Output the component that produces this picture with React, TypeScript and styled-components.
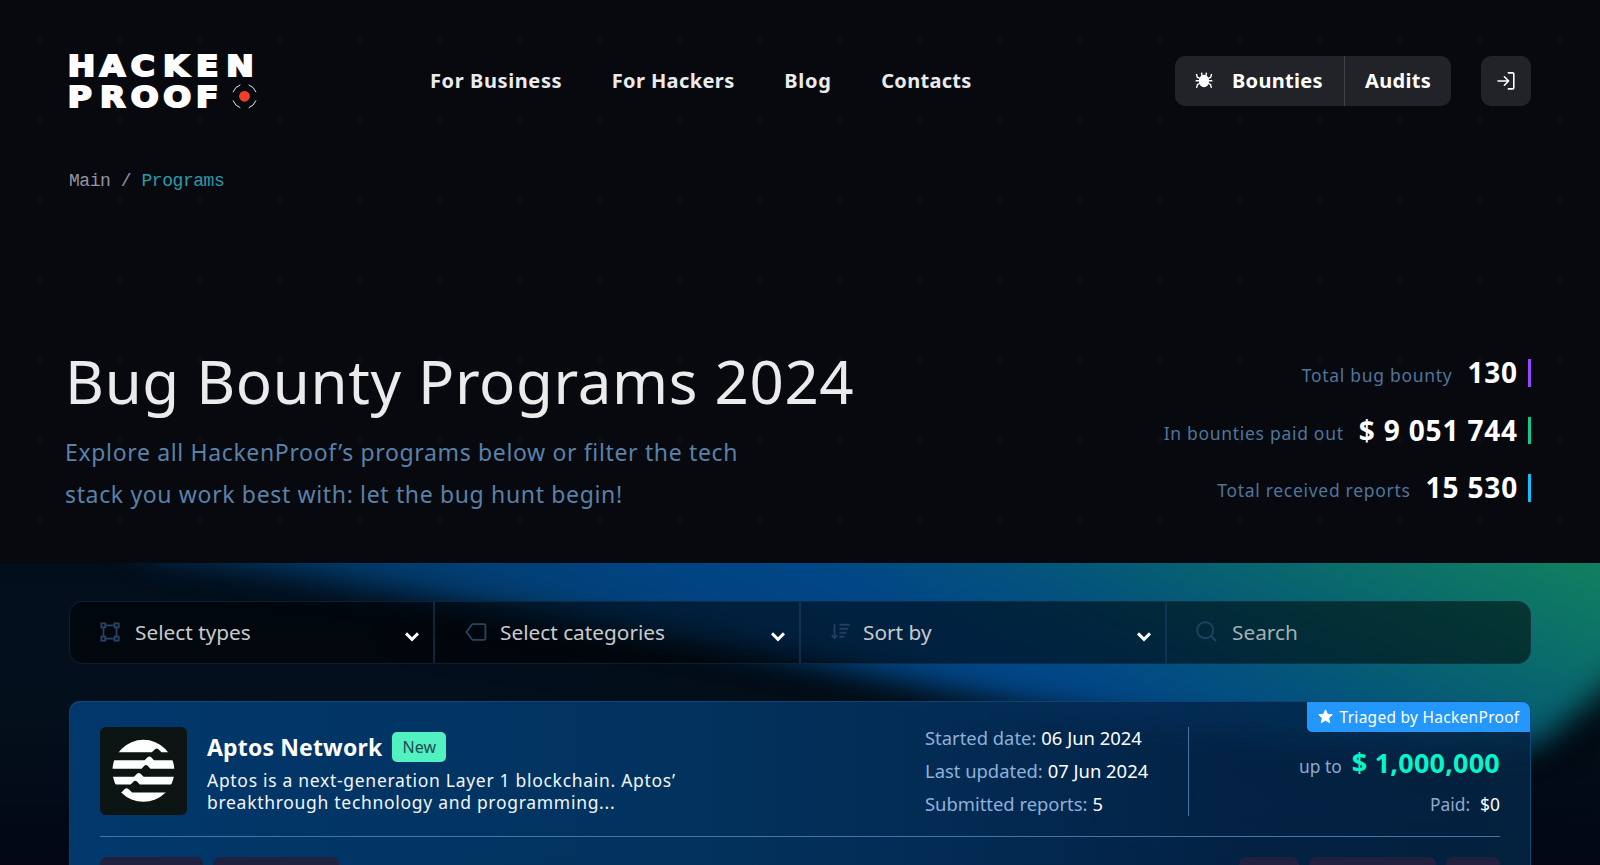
import React from 'react';
import styled, { createGlobalStyle } from 'styled-components';

const Global = createGlobalStyle`
  *, *::before, *::after { box-sizing: border-box; }
  body {
    margin: 0;
    background: #020812;
    color: #fff;
    font-family: 'Noto Sans', sans-serif;
    overflow: hidden;
  }
  h1, h2, p, dl, dd, dt { margin: 0; font-weight: inherit; }
  a { color: inherit; text-decoration: none; }
  button { font: inherit; color: inherit; border: 0; padding: 0; background: none; }
`;

const Page = styled.div`
  width: 1600px;
  height: 865px;
  overflow: hidden;
  display: flex;
  flex-direction: column;
`;

/* ---------- hero ---------- */
const Hero = styled.header`
  flex: none;
  height: 563px;
  padding: 0 69px;
  background: #07090f url("data:image/svg+xml,%3Csvg xmlns='http://www.w3.org/2000/svg' width='80' height='80'%3E%3Cpath d='M35 40h10M40 35v10' stroke='%23ffffff' stroke-opacity='.035'/%3E%3C/svg%3E");
`;

const TopBar = styled.div`
  display: flex;
  align-items: center;
  height: 50px;
  margin-top: 56px;
`;

const LogoLink = styled.a`
  display: block;
  width: 188px;
  height: 56px;
  margin-right: 173px;
  svg { overflow: visible; }
`;

const Nav = styled.nav`
  display: flex;
  flex: 1;
  gap: 49.5px;
`;

const NavLink = styled.a<{ $ls: number }>`
  font-size: 20px;
  font-weight: 700;
  line-height: 50px;
  color: #ebebeb;
  letter-spacing: ${(p) => p.$ls}px;
`;

const Switch = styled.div`
  display: flex;
  width: 276px;
  height: 50px;
  margin-right: 30px;
  background: #222329;
  border-radius: 10px;
`;

const SwitchItem = styled.button<{ $width: number; $first?: boolean }>`
  display: flex;
  align-items: center;
  width: ${(p) => p.$width}px;
  padding: 0 0 2px 20px;
  gap: 19px;
  font-size: 20px;
  font-weight: 700;
  letter-spacing: 0.3px;
  border-right: ${(p) => (p.$first ? '1px solid #414248' : '0')};
`;

const LoginButton = styled.button`
  display: grid;
  place-items: center;
  width: 50px;
  height: 50px;
  border-radius: 10px;
  background: #222329;
`;

const Crumbs = styled.div`
  margin-top: 64px;
  height: 22px;
  font: 18px/22px 'Liberation Mono', monospace;
  letter-spacing: -0.45px;
  white-space: pre;
  color: #9296a1;
  span { color: #2a9ca9; }
`;

const HeroBody = styled.div`
  display: flex;
  justify-content: space-between;
  margin-top: 146px;
`;

const Intro = styled.div`
  margin: 1px 0 0 -4px;
`;

const Title = styled.h1`
  font-size: 60px;
  line-height: 84px;
  letter-spacing: 0.64px;
  white-space: nowrap;
  color: #ebebeb;
`;

const Lead = styled.p`
  font-size: 23px;
  line-height: 42px;
  letter-spacing: 0.65px;
  color: #5a81a8;
  margin-top: 8px;
`;

const Stats = styled.dl`
  display: flex;
  flex-direction: column;
  align-items: flex-end;
  gap: 30px;
  margin-top: 21px;
`;

const Stat = styled.div<{ $color: string }>`
  display: flex;
  align-items: baseline;
  height: 27.5px;
  line-height: 26px;
  padding-right: 10px;
  border-right: 3px solid ${(p) => p.$color};
`;

const StatLabel = styled.dt`
  font-size: 17.5px;
  letter-spacing: 0.7px;
  color: #50759b;
  margin-right: 15px;
  transform: translateY(-1px);
`;

const StatValue = styled.dd`
  font-size: 28px;
  font-weight: 700;
  letter-spacing: 0.85px;
`;

/* ---------- programs ---------- */
const Programs = styled.main`
  position: relative;
  flex: 1;
  padding: 38px 69px 0;
  overflow: hidden;
  background: linear-gradient(180deg, #020e1c 0, #03101c 45%, #020713 100%);
`;

const Glow = styled.svg`
  position: absolute;
  inset: 0;
`;

const Filters = styled.div`
  position: relative;
  display: flex;
  height: 63px;
  border: 1px solid rgba(36, 60, 94, 0.42);
  border-radius: 14px;
  background: rgba(0, 0, 0, 0.52);
`;

const Filter = styled.div<{ $gap: number; $pad: number; $width: number; $muted?: boolean }>`
  display: flex;
  width: ${(p) => p.$width}px;
  align-items: center;
  padding: 0 14px 0 ${(p) => p.$pad}px;
  font-size: 20.8px;
  color: ${(p) => (p.$muted ? '#a1b1b1' : '#c8cacd')};
  svg { flex: none; margin-bottom: 2px; }
  &:not(:last-child) { border-right: 2px solid rgba(31, 66, 106, 0.5); }
  span { flex: 1; margin: 0 0 2px ${(p) => p.$gap}px; }
  svg:last-child { margin: 8px 0 0; }
`;

const Card = styled.article`
  position: relative;
  margin-top: 37px;
  height: 220px;
  padding: 25px 30px 0;
  border: 1px solid rgba(40, 100, 150, 0.4);
  border-radius: 11px;
  background: linear-gradient(90deg, rgba(2, 58, 112, 0.96) 0, rgba(2, 53, 98, 0.95) 42%, rgba(3, 46, 89, 0.93) 60%, rgba(3, 38, 76, 0.86) 80%, rgba(4, 37, 68, 0.86) 100%);
`;

const CardTop = styled.div`
  display: flex;
  height: 110px;
  border-bottom: 1px solid #4376a7;
`;

const Avatar = styled.svg`
  flex: none;
  border-radius: 6px;
`;

const About = styled.div`
  width: 718px;
  margin-left: 20px;
`;

const NameRow = styled.div`
  display: flex;
  align-items: center;
  gap: 10px;
  margin-top: 5px;
  height: 30px;
`;

const Name = styled.h2`
  font-size: 23px;
  font-weight: 700;
  letter-spacing: 0.15px;
  line-height: 28px;
  margin-bottom: 1px;
`;

const NewBadge = styled.span`
  width: 54px;
  font-size: 16px;
  line-height: 31px;
  height: 30px;
  text-align: center;
  border-radius: 5px;
  color: #1e4a50;
  background: #51f1c1;
`;

const Description = styled.p`
  width: 500px;
  margin-top: 7px;
  font-size: 17.5px;
  line-height: 22px;
  letter-spacing: 0.7px;
  color: #f1f5f9;
`;

const Facts = styled.dl`
  width: 264px;
  height: 89px;
  border-right: 1px solid #4376a7;
`;

const Fact = styled.div`
  display: flex;
  gap: 5px;
  height: 33px;
  font-size: 18.4px;
  line-height: 22px;
  white-space: nowrap;
  dt { color: #8fb0da; }
`;

const Reward = styled.div`
  flex: 1;
  text-align: right;
  padding-top: 18px;
`;

const RewardLine = styled.div<{ $gap: number; $height: number }>`
  display: flex;
  justify-content: flex-end;
  align-items: baseline;
  gap: ${(p) => p.$gap}px;
  line-height: ${(p) => p.$height}px;
  font-size: 17.4px;
  color: #8fa9cd;
  strong { font-size: 27px; color: #05f6cb; letter-spacing: 0.2px; }
  b { font-weight: 400; color: #fff; }
`;

const Triaged = styled.div`
  position: absolute;
  top: 0;
  right: 0;
  display: flex;
  align-items: center;
  justify-content: center;
  gap: 7px;
  width: 223px;
  height: 30px;
  padding-bottom: 1px;
  font-size: 15.5px;
  letter-spacing: 0.28px;
  border-radius: 0 8px 0 5px;
  background: #2397fc;
`;

const Tags = styled.div`
  display: flex;
  gap: 10px;
  margin-top: 20px;
`;

const Tag = styled.span<{ $width: number; $push?: boolean }>`
  width: ${(p) => p.$width}px;
  height: 30px;
  margin-left: ${(p) => (p.$push ? 'auto' : '0')};
  border-radius: 7px;
  background: #1f213f;
`;

const Logo = () => (
  <svg width="188" height="56" viewBox="0 0 188 56" fill="#fff">
    <g
      fontFamily="DejaVu Sans"
      fontWeight="700"
      fontSize="28.5"
      stroke="#fff"
      strokeWidth="2"
      transform="scale(1.15 1)"
    >
      <text y="22.8" x="-1.2 26.8 53.8 81.8 110.4 136.8">HACKEN</text>
      <text y="53.8" x="-1.2 27 53.8 81.9 110.4">PROOF</text>
    </g>
    <circle cx="175.5" cy="43.3" r="5.4" fill="#f43e2c" />
    <circle
      cx="175.5" cy="43.3" r="12.2" fill="none" stroke="#e6e6e6" strokeWidth="1"
      pathLength="360" strokeDasharray="50 40" strokeDashoffset="-20"
    />
  </svg>
);

const BugIcon = () => (
  <svg width="18" height="18" viewBox="0 0 18 18" fill="#fff">
    <ellipse cx="9" cy="10" rx="5" ry="6.2" />
    <path
      d="M7 4.8 6.6 1.6M11 4.8l.4-3.2M5 7.4 2.4 6.4 1.4 3M13 7.4l2.6-1 1-3.4M.6 9.8h16.8M5 12.2l-2.6 1.4-.8 3.2M13 12.2l2.6 1.4.8 3.2"
      fill="none" stroke="#fff" strokeWidth="1.4"
    />
  </svg>
);

const LoginIcon = () => (
  <svg width="18" height="18" viewBox="0 0 18 18" fill="none" stroke="#fff" strokeWidth="1.6" strokeLinecap="round" strokeLinejoin="round">
    <path d="M1 9h10.5M7.4 4.8 11.6 9l-4.2 4.2M11.4.9h4.2q1.2 0 1.2 1.2v13.6q0 1.2-1.2 1.2h-4.2" />
  </svg>
);

const TypesIcon = () => (
  <svg width="20" height="20" viewBox="0 0 20 20" fill="none" stroke="#274468" strokeWidth="1.8">
    <path d="M1.3 1.3h4v4h-4zM14.7 1.3h4v4h-4zM1.3 14.7h4v4h-4zM14.7 14.7h4v4h-4zM5.3 3.3h9.4M5.3 16.7h9.4M3.5 5.3v9.4M16.5 5.3v9.4" />
  </svg>
);

const CategoryIcon = () => (
  <svg width="22" height="18" viewBox="0 0 22 18" fill="none" stroke="#274468" strokeWidth="1.8" strokeLinejoin="round">
    <path d="M7.2 1.2h11.6q1.6 0 1.6 1.6v12.4q0 1.6-1.6 1.6H7.2L1.4 9z" />
  </svg>
);

const SortIcon = () => (
  <svg width="20" height="17" viewBox="0 0 20 17" fill="none" stroke="#213f61" strokeWidth="1.9">
    <path d="M3.5.8v14M.8 12.4l2.7 2.7 2.7-2.7M8.4 1.8H19M8.4 5.8h8.8M8.4 9.8h6.8M8.4 13.8h4.8" />
  </svg>
);

const SearchIcon = () => (
  <svg width="21" height="21" viewBox="0 0 21 21" fill="none" stroke="#20425f" strokeWidth="1.9">
    <circle cx="9.2" cy="9.2" r="8" />
    <path d="m15 15 5 5" />
  </svg>
);

const Chevron = () => (
  <svg width="14" height="10" viewBox="0 0 14 10" fill="none" stroke="#fff" strokeWidth="3">
    <path d="m1 1.4 6 6 6-6" />
  </svg>
);

const StarIcon = () => (
  <svg width="15" height="15" viewBox="0 0 16 16" fill="#fff" stroke="#fff" strokeLinejoin="round">
    <path d="m8 .9 2.1 4.7 5.1.5-3.8 3.4 1.1 5.1L8 12l-4.5 2.6 1.1-5.1L.8 6.1l5.1-.5z" />
  </svg>
);

const AptosAvatar = () => (
  <Avatar width="87" height="88" viewBox="0 0 87 88">
    <rect width="87" height="88" fill="#0c1414" />
    <circle cx="43.4" cy="43.8" r="31" fill="#fff" />
    <g fill="#0c1414">
      <path d="M0 25.3h51.8l3.2-3q1.7-1.4 3.4 0l3 3H87v8H54l-2.8-3q-1.8-1.4-3.6 0l-3 3H0z" />
      <path d="M0 41.8h41.6l2.7-3q1.7-1.4 3.4 0l2.6 3H87v7.9H43.6l-3-3q-1.8-1.4-3.6 0l-3 3H0z" />
      <path d="M0 57.4h30.6l3-3q1.7-1.4 3.4 0l2.8 3H87v8H32.2l-3.8-3.4q-1.8-1.4-3.6 0l-3.4 3.4H0z" />
    </g>
  </Avatar>
);

const Backdrop = () => (
  <Glow width="1600" height="302" viewBox="0 0 1600 302">
    <defs>
      <linearGradient id="beam" gradientUnits="userSpaceOnUse" x1="200" y1="0" x2="423" y2="-512">
        <stop offset="0" stopColor="#02355f" />
        <stop offset="0.14" stopColor="#023c6e" />
        <stop offset="0.29" stopColor="#014380" />
        <stop offset="0.43" stopColor="#014687" />
        <stop offset="0.57" stopColor="#03527d" />
        <stop offset="0.714" stopColor="#076171" />
        <stop offset="0.857" stopColor="#0c7168" />
        <stop offset="1" stopColor="#118060" />
      </linearGradient>
      <filter id="soft" x="-20%" y="-50%" width="140%" height="200%" colorInterpolationFilters="sRGB">
        <feGaussianBlur stdDeviation="15" />
      </filter>
      <filter id="wide" x="-20%" y="-50%" width="140%" height="200%" colorInterpolationFilters="sRGB">
        <feGaussianBlur stdDeviation="22" />
      </filter>
    </defs>
    <path d="M400 60C600 80 700 120 900 150S1300 260 1600 200V150L900 100 500 30z" fill="#010609" opacity=".5" filter="url(#wide)" />
    <path
      d="M90-60 150 -8C350 16 480 46 640 70S860 112 980 134S1280 178 1420 184S1530 186 1580 146L1680 60V-80z"
      fill="url(#beam)" filter="url(#soft)"
    />
  </Glow>
);

const filters = [
  { label: 'Select types', icon: <TypesIcon />, pad: 30, gap: 15, width: 365 },
  { label: 'Select categories', icon: <CategoryIcon />, pad: 30, gap: 13, width: 366 },
  { label: 'Sort by', icon: <SortIcon />, pad: 30, gap: 12, width: 366 },
];

const stats = [
  { label: 'Total bug bounty', value: '130', color: '#9747ff' },
  { label: 'In bounties paid out', value: '$ 9 051 744', color: '#0fca8c' },
  { label: 'Total received reports', value: '15 530', color: '#12bfff' },
];

const facts = [
  ['Started date:', '06 Jun 2024'],
  ['Last updated:', '07 Jun 2024'],
  ['Submitted reports:', '5'],
];

export default function App() {
  return (
    <Page>
      <Global />
      <Hero>
        <TopBar>
          <LogoLink href="#"><Logo /></LogoLink>
          <Nav>
            <NavLink href="#" $ls={0.6}>For Business</NavLink>
            <NavLink href="#" $ls={0.4}>For Hackers</NavLink>
            <NavLink href="#" $ls={0.8}>Blog</NavLink>
            <NavLink href="#" $ls={0.3}>Contacts</NavLink>
          </Nav>
          <Switch>
            <SwitchItem $width={170} $first><BugIcon />Bounties</SwitchItem>
            <SwitchItem $width={106}>Audits</SwitchItem>
          </Switch>
          <LoginButton><LoginIcon /></LoginButton>
        </TopBar>
        <Crumbs>Main / <span>Programs</span></Crumbs>
        <HeroBody>
          <Intro>
            <Title>Bug Bounty Programs 2024</Title>
            <Lead>
              Explore all HackenProof’s programs below or filter the tech<br />
              stack you work best with: let the bug hunt begin!
            </Lead>
          </Intro>
          <Stats>
            {stats.map((s) => (
              <Stat key={s.label} $color={s.color}>
                <StatLabel>{s.label}</StatLabel>
                <StatValue>{s.value}</StatValue>
              </Stat>
            ))}
          </Stats>
        </HeroBody>
      </Hero>
      <Programs>
        <Backdrop />
        <Filters>
          {filters.map((f) => (
            <Filter key={f.label} $pad={f.pad} $gap={f.gap} $width={f.width}>
              {f.icon}
              <span>{f.label}</span>
              <Chevron />
            </Filter>
          ))}
          <Filter $pad={29} $gap={15} $width={363} $muted>
            <SearchIcon />
            <span>Search</span>
          </Filter>
        </Filters>
        <Card>
          <CardTop>
            <AptosAvatar />
            <About>
              <NameRow>
                <Name>Aptos Network</Name>
                <NewBadge>New</NewBadge>
              </NameRow>
              <Description>
                Aptos is a next-generation Layer 1 blockchain. Aptos’<br />
                breakthrough technology and programming...
              </Description>
            </About>
            <Facts>
              {facts.map(([k, v]) => (
                <Fact key={k}><dt>{k}</dt><dd>{v}</dd></Fact>
              ))}
            </Facts>
            <Reward>
              <RewardLine $gap={10} $height={36}>up to<strong>$ 1,000,000</strong></RewardLine>
              <RewardLine $gap={10} $height={41}>Paid:<b>$0</b></RewardLine>
            </Reward>
          </CardTop>
          <Tags>
            <Tag $width={103} />
            <Tag $width={126} />
            <Tag $width={60} $push />
            <Tag $width={127} />
            <Tag $width={54} />
          </Tags>
          <Triaged><StarIcon />Triaged by HackenProof</Triaged>
        </Card>
      </Programs>
    </Page>
  );
}
